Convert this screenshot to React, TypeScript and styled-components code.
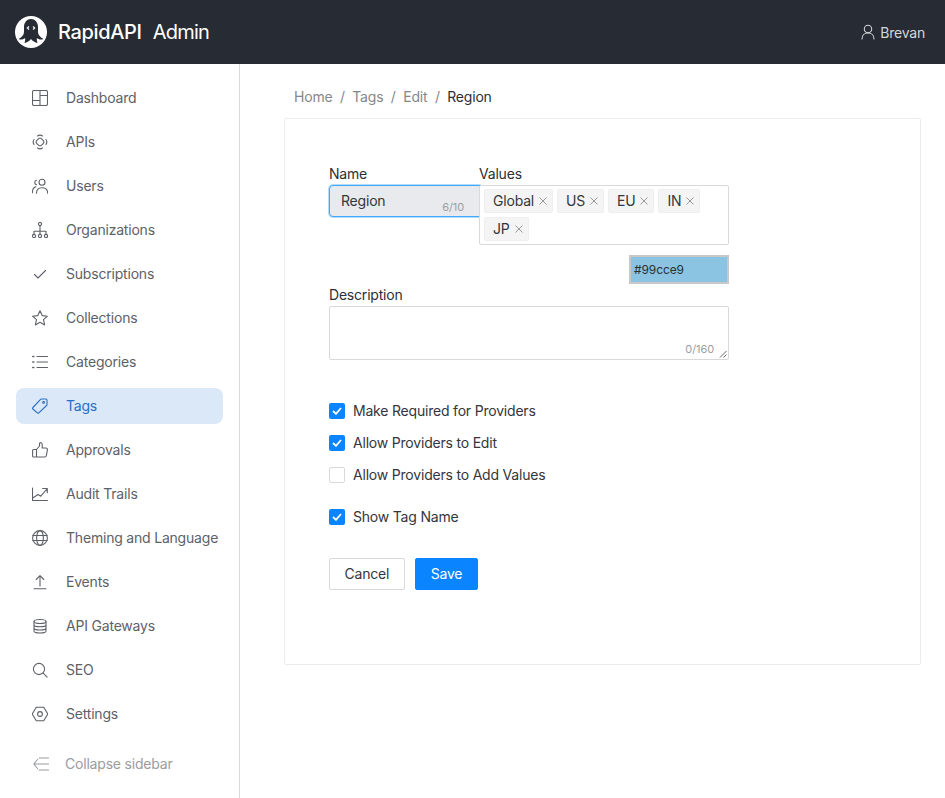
import React from "react";
import styled, { createGlobalStyle } from "styled-components";

const Global = createGlobalStyle`
  html, body { margin: 0; padding: 0; background: #fff; }
  body { font-family: Inter, "Liberation Sans", sans-serif; font-size: 14px; letter-spacing: -0.2px; color: #2b2f36; overflow: hidden; }
  * { box-sizing: border-box; }
`;

const Page = styled.div`
  width: 945px;
  height: 798px;
  display: flex;
  flex-direction: column;
  overflow: hidden;
`;
const Header = styled.header`
  height: 64px;
  flex: none;
  background: #272b33;
  display: flex;
  align-items: center;
  justify-content: space-between;
  padding: 0 20px 0 14px;
`;
const Brand = styled.div`
  display: flex;
  align-items: center;
  gap: 10px;
  color: #fff;
  font-size: 20px;
  line-height: 24px;
`;
const BrandName = styled.span`
  font-weight: 500;
  letter-spacing: -0.35px;
`;
const BrandSuffix = styled.span`
  font-weight: 400;
  letter-spacing: -0.75px;
  margin-left: 1px;
`;
const UserBox = styled.div`
  display: flex;
  align-items: center;
  gap: 4px;
  color: #d4d6da;
  font-size: 14px;
`;
const Body = styled.div`
  flex: 1;
  display: flex;
  min-height: 0;
`;
const Sidebar = styled.aside`
  width: 240px;
  flex: none;
  border-right: 1px solid #d9d9d9;
  padding: 16px 16px 0;
  display: flex;
  flex-direction: column;
`;
const Nav = styled.nav`
  display: flex;
  flex-direction: column;
  gap: 8px;
  width: 207px;
`;
const RaisedText = styled.span`
  padding-bottom: 2px;
`;
const NavItem = styled.div<{ $active?: boolean }>`
  height: 36px;
  border-radius: 8px;
  display: flex;
  align-items: center;
  gap: 18px;
  padding-left: 16px;
  white-space: nowrap;
  font-size: 14px;
  color: ${(p) => (p.$active ? "#2a6ec4" : "#5e6168")};
  background: ${(p) => (p.$active ? "#dbe8f8" : "transparent")};
`;
const Collapse = styled.div`
  margin-top: 14px;
  height: 36px;
  display: flex;
  align-items: center;
  gap: 16px;
  padding-left: 17px;
  color: #9a9c9f;
  font-size: 14px;
`;
const Main = styled.main`
  flex: 1;
  padding: 0 24px 0 44px;
`;
const Crumbs = styled.div`
  height: 54px;
  padding: 24px 0 0 10px;
  display: flex;
  gap: 7.5px;
  line-height: 18px;
  color: #85878b;
  font-size: 14px;
`;
const CrumbCurrent = styled.span`
  color: #2b2f36;
`;
const Card = styled.section`
  width: 637px;
  height: 547px;
  border: 1px solid #ececec;
  border-radius: 2px;
  padding: 46px 44px 0;
`;
const Row = styled.div`
  display: flex;
  width: 400px;
`;
const NameCol = styled.div`
  width: 150px;
  flex: none;
`;
const ValuesCol = styled.div`
  width: 250px;
  flex: none;
`;
const Label = styled.div`
  font-size: 14px;
  line-height: 17px;
  height: 20px;
  color: #2b2f36;
`;
const NameInput = styled.div`
  position: relative;
  width: 151px;
  height: 32px;
  background: #e8eaee;
  border: 1px solid #40a9ff;
  border-radius: 4px 0 0 4px;
  box-shadow: 0 0 0 1px rgba(64, 169, 255, 0.4);
  padding-left: 11px;
  line-height: 30px;
  color: #33363c;
`;
const Counter = styled.span`
  position: absolute;
  right: 15px;
  bottom: 1px;
  line-height: 15px;
  font-size: 11px;
  letter-spacing: -0.1px;
  color: #9c9ea2;
`;
const TagBox = styled.div`
  position: relative;
  z-index: 1;
  height: 60px;
  background: #fff;
  border: 1px solid #d9d9d9;
  border-radius: 2px;
  padding: 3px 4px;
  display: flex;
  flex-wrap: wrap;
  align-content: flex-start;
  gap: 4px;
`;
const Tag = styled.div`
  height: 24px;
  background: #f4f4f5;
  border: 1px solid #efefef;
  border-radius: 2px;
  padding: 0 5px 0 8px;
  display: flex;
  align-items: center;
  gap: 5px;
  color: #33363c;
  font-size: 14px;
`;
const ColorRow = styled.div`
  width: 400px;
  display: flex;
  justify-content: flex-end;
  margin-top: 10px;
`;
const ColorInput = styled.div`
  width: 100px;
  height: 29px;
  background: #8bc3e3;
  border: 2px solid #c8c8c8;
  padding-left: 3px;
  line-height: 25px;
  font-size: 12px;
  letter-spacing: -0.1px;
  color: #2b2f36;
`;
const DescLabel = styled(Label)`
  height: 22px;
  padding-top: 2px;
`;
const TextArea = styled.div`
  position: relative;
  width: 400px;
  height: 54px;
  border: 1px solid #d9d9d9;
  border-radius: 2px;
`;
const AreaCounter = styled(Counter)`
  right: 14px;
  bottom: 2px;
`;
const Grip = styled.svg`
  position: absolute;
  right: 1px;
  bottom: 1px;
`;
const Checks = styled.div`
  margin-top: 40px;
  display: flex;
  flex-direction: column;
  gap: 10px;
`;
const CheckRow = styled.div<{ $spaced?: boolean }>`
  display: flex;
  align-items: center;
  gap: 8px;
  height: 22px;
  color: #33363c;
  margin-top: ${(p) => (p.$spaced ? "10px" : "0")};
`;
const Box = styled.div<{ $on?: boolean }>`
  width: 16px;
  height: 16px;
  border-radius: 2px;
  display: flex;
  align-items: center;
  justify-content: center;
  background: ${(p) => (p.$on ? "#0a84ff" : "#fff")};
  border: ${(p) => (p.$on ? "none" : "1px solid #d9d9d9")};
`;
const Buttons = styled.div`
  margin-top: 30px;
  display: flex;
  gap: 10px;
`;
const Button = styled.div<{ $primary?: boolean }>`
  height: 32px;
  padding: 0 ${(p) => (p.$primary ? "15px" : "14.5px")};
  border-radius: 2px;
  display: flex;
  align-items: center;
  font-size: 14px;
  color: ${(p) => (p.$primary ? "#fff" : "#33363c")};
  background: ${(p) => (p.$primary ? "#0a84ff" : "#fff")};
  border: 1px solid ${(p) => (p.$primary ? "#0a84ff" : "#d9d9d9")};
`;
const IconSvg = styled.svg`
  flex: none;
  fill: none;
  stroke: currentColor;
  stroke-width: 1.1;
  stroke-linecap: round;
  stroke-linejoin: round;
`;

const I: React.FC<{ children: React.ReactNode }> = ({ children }) => (
  <IconSvg width="16" height="16" viewBox="0 0 16 16">{children}</IconSvg>
);

const nav: [string, React.ReactNode][] = [
  ["Dashboard", <><rect x="0.5" y="0.5" width="15" height="15" rx="1.5" /><path d="M8 .5V15.5M.5 10.5H8M8 5.5h7.5" /></>],
  ["APIs", <><rect x="4.7" y="4.7" width="6.6" height="6.6" rx="1.8" transform="rotate(45 8 8)" /><path d="M5.5 2Q8 .3 10.500 2M14 5.500Q15.700 8 14 10.500M10.500 14Q8 15.700 5.500 14M2 10.500Q.3 8 2 5.500" /></>],
  ["Users", <><circle cx="10" cy="4.3" r="3" /><path d="M4.500 6.800a2.300 2.300 0 0 1 .2-4.500M.4 14.700c0-3.200 1.300-5.300 3.600-5.900M4.500 15.300c0-3.400 2-5.500 5.500-5.500s5.700 2.100 5.700 5.500" /></>],
  ["Organizations", <><circle cx="8" cy="2" r="1.600" /><circle cx="2" cy="14" r="1.600" /><circle cx="8" cy="14" r="1.600" /><circle cx="14" cy="14" r="1.600" /><path d="M8 3.600V12.400M2 12.400V9.200h12v3.200" /></>],
  ["Subscriptions", <path d="M2.500 8.500 6 12l7.500-7.500" />],
  ["Collections", <path d="M8 .8l2.200 4.800 5.200.6-3.900 3.500 1.100 5.200L8 12.300l-4.600 2.600 1.100-5.200L.6 6.200l5.200-.6Z" />],
  ["Categories", <><path d="M5 2.500h10.500M5 8h10.500M5 13.500h10.500" /><path d="M.8 2.500h.9M.8 8h.9M.8 13.500h.9" strokeWidth="1.700" /></>],
  ["Tags", <><path d="M.9 9.500 8.600 1.400c.3-.3.6-.4 1-.4h4.300c.6 0 1.100.5 1.100 1.100v4.400c0 .4-.1.7-.4 1l-7.800 7.300c-.4.4-1 .4-1.500 0L.9 11c-.4-.4-.4-1 0-1.500Z" /><circle cx="11.600" cy="4.400" r="0.900" /></>],
  ["Approvals", <path d="M4.500 15V7.500L7.500 4V1.600C7.500.9 8 .6 8.600.6c1 0 1.600.9 1.600 2V6h3.700c1 0 1.700.9 1.500 1.900l-1 5.600c-.2.9-.9 1.500-1.800 1.500H1.600c-.6 0-1-.4-1-1V8.500c0-.6.4-1 1-1h2.900" />],
  ["Audit Trails", <><path d="M.5 2V14.500h15" /><path d="M.8 12 6 8.500l2.800 1.700L15 3M10.600 2.500H15.300V6.800" /></>],
  ["Theming and Language", <><circle cx="8" cy="8" r="7.400" /><ellipse cx="8" cy="8" rx="3.400" ry="7.400" /><path d="M.8 5.500h14.400M.8 10.500h14.400" /></>],
  ["Events", <path d="M8 12V1.800M4.200 5.500 8 1.700l3.800 3.800M2 14.800h12" />],
  ["API Gateways", <><ellipse cx="8" cy="3.500" rx="6" ry="2" /><path d="M2 3.500v9.500c0 1.200 2.700 2 6 2s6-.8 6-2V3.500M2 6.800c0 1.200 2.700 2 6 2s6-.8 6-2M2 10c0 1.200 2.700 2 6 2s6-.8 6-2" /></>],
  ["SEO", <><circle cx="7" cy="7" r="5.600" /><path d="m11.200 11.200 3.900 3.900" /></>],
  ["Settings", <><path d="M4.300 1.300h7.400L15.800 8l-4.100 6.700H4.300L.2 8Z" /><circle cx="8" cy="8" r="2.400" /></>],
];

const tags = ["Global", "US", "EU", "IN", "JP"];
const checks: [string, boolean, boolean][] = [
  ["Make Required for Providers", true, false],
  ["Allow Providers to Edit", true, false],
  ["Allow Providers to Add Values", false, false],
  ["Show Tag Name", true, true],
];

export default function App() {
  return (
    <Page>
      <Global />
      <Header>
        <Brand>
          <svg width="34" height="34" viewBox="0 0 34 34">
            <circle cx="17" cy="17" r="16" fill="#fff" />
            <g transform="translate(.5 0)">
              <path d="M9.500 12C9.500 7.500 12.500 4 16.500 4s7 3.500 7 8v5c0 3 2.500 5.500 5.500 7-2.500 1-5 .5-6.500-1-.5 1.500 0 3 .5 5-2.500-.5-5-2-6.500-4-1.500 2-4 3.500-6.500 4 .5-2 1-3.500.5-5-1.500 1.500-4 2-6.500 1 3-1.500 5.500-4 5.500-7Z" fill="#272b33" />
              <path d="M14.500 11.500 12.800 13l1.700 1.500M18.500 11.500l1.700 1.500-1.700 1.500" stroke="#fff" strokeWidth="1.100" fill="none" />
            </g>
          </svg>
          <BrandName>RapidAPI</BrandName>
          <BrandSuffix>Admin</BrandSuffix>
        </Brand>
        <UserBox>
          <I><circle cx="8" cy="5" r="3.700" /><path d="M2 15c0-3.500 2.500-6 6-6s6 2.500 6 6" /></I>
          Brevan
        </UserBox>
      </Header>
      <Body>
        <Sidebar>
          <Nav>
            {nav.map(([label, icon]) => (
              <NavItem key={label} $active={label === "Tags"}>
                <I>{icon}</I>
                <RaisedText>{label}</RaisedText>
              </NavItem>
            ))}
          </Nav>
          <Collapse>
            <I><path d="M4.500 3.500.8 8l3.700 4.500M1 8h14.500M6 2h9.500M6 14h9.500" /></I>
            <RaisedText>Collapse sidebar</RaisedText>
          </Collapse>
        </Sidebar>
        <Main>
          <Crumbs>
            <span>Home</span><span>/</span><span>Tags</span><span>/</span><span>Edit</span><span>/</span>
            <CrumbCurrent>Region</CrumbCurrent>
          </Crumbs>
          <Card>
            <Row>
              <NameCol>
                <Label>Name</Label>
                <NameInput>Region<Counter>6/10</Counter></NameInput>
              </NameCol>
              <ValuesCol>
                <Label>Values</Label>
                <TagBox>
                  {tags.map((t) => (
                    <Tag key={t}>
                      <RaisedText>{t}</RaisedText>
                      <svg width="8" height="8" viewBox="0 0 8 8"><path d="M.5 .5l7 7M7.500 .5l-7 7" stroke="#999" strokeWidth="1" /></svg>
                    </Tag>
                  ))}
                </TagBox>
              </ValuesCol>
            </Row>
            <ColorRow><ColorInput>#99cce9</ColorInput></ColorRow>
            <DescLabel>Description</DescLabel>
            <TextArea>
              <AreaCounter>0/160</AreaCounter>
              <Grip width="8" height="8" viewBox="0 0 8 8"><path d="M1 7.500 7.500 1M4.500 7.500l3-3" stroke="#555" strokeWidth="0.900" /></Grip>
            </TextArea>
            <Checks>
              {checks.map(([label, on, spaced]) => (
                <CheckRow key={label} $spaced={spaced}>
                  <Box $on={on}>
                    {on && <svg width="10" height="8" viewBox="0 0 10 8"><path d="M1 4l3 2.800L9 1" stroke="#fff" strokeWidth="1.800" fill="none" /></svg>}
                  </Box>
                  <RaisedText>{label}</RaisedText>
                </CheckRow>
              ))}
            </Checks>
            <Buttons>
              <Button><RaisedText>Cancel</RaisedText></Button>
              <Button $primary><RaisedText>Save</RaisedText></Button>
            </Buttons>
          </Card>
        </Main>
      </Body>
    </Page>
  );
}
